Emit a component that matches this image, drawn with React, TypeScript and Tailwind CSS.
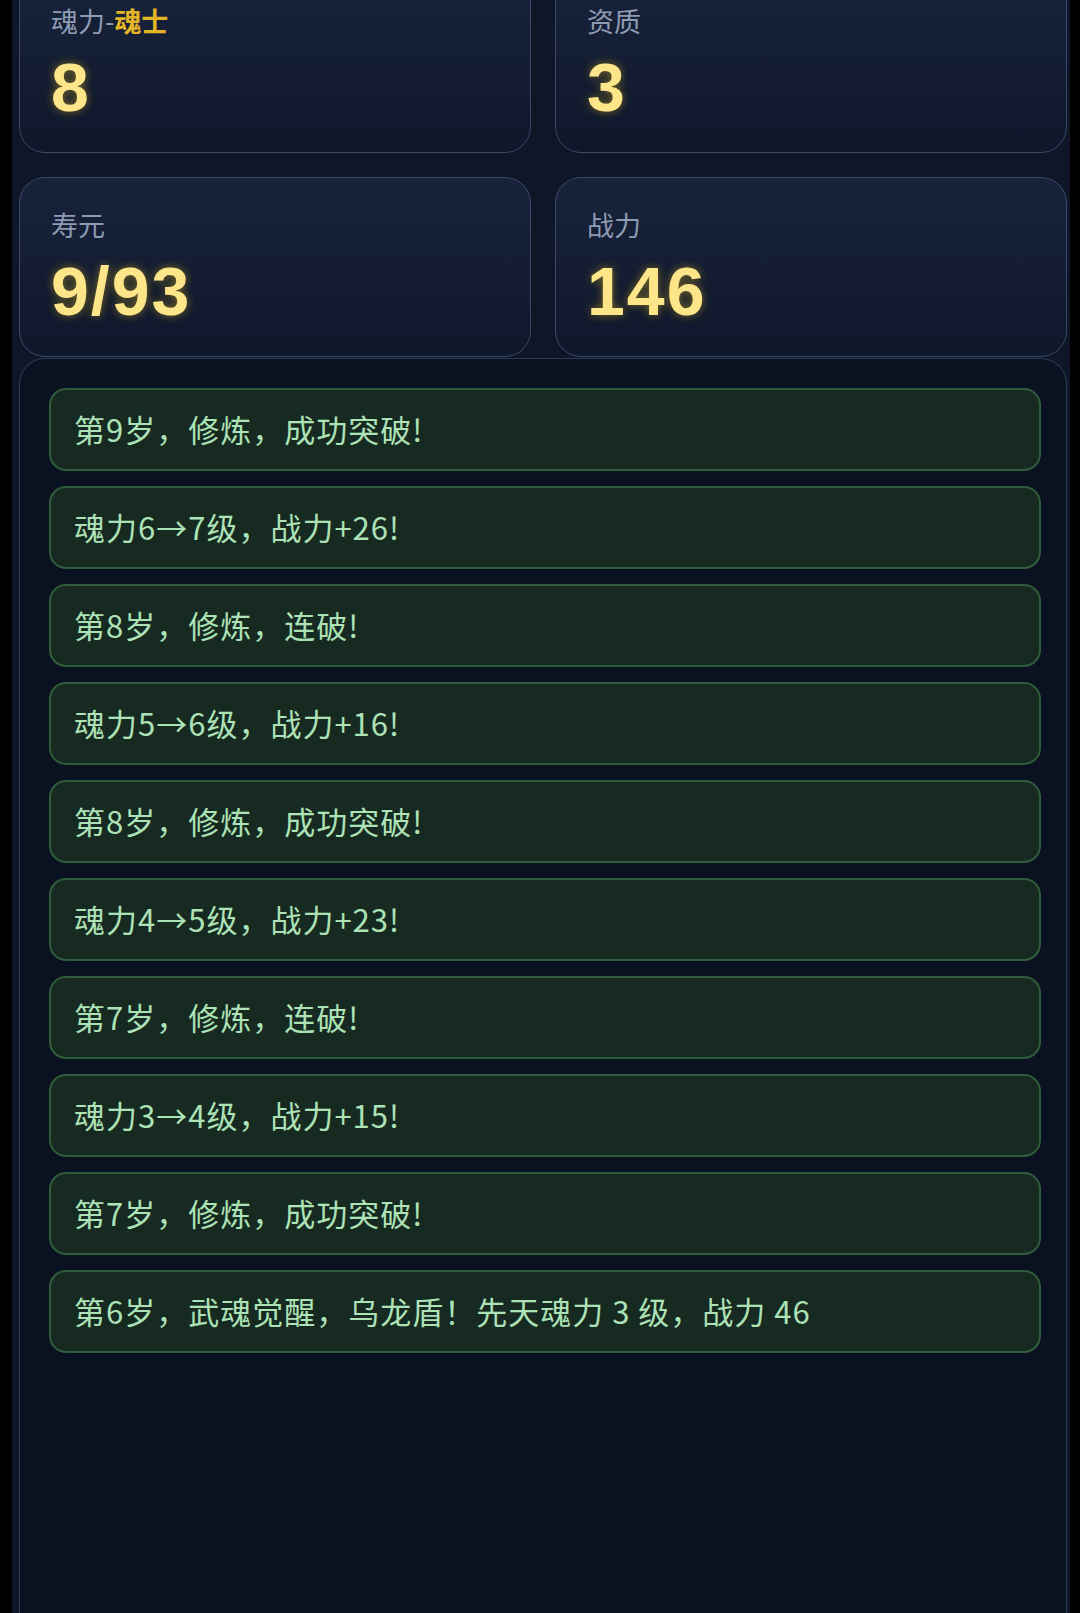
import React from 'react';

const stats = [
  { label: '魂力', tag: '魂士', value: '8' },
  { label: '资质', value: '3' },
  { label: '寿元', value: '9/93' },
  { label: '战力', value: '146' },
];

const logs = [
  '第9岁，修炼，成功突破!',
  '魂力6→7级，战力+26!',
  '第8岁，修炼，连破!',
  '魂力5→6级，战力+16!',
  '第8岁，修炼，成功突破!',
  '魂力4→5级，战力+23!',
  '第7岁，修炼，连破!',
  '魂力3→4级，战力+15!',
  '第7岁，修炼，成功突破!',
  '第6岁，武魂觉醒，乌龙盾！先天魂力 3 级，战力 46',
];

const StatCard: React.FC<{ label: string; tag?: string; value: string }> = ({ label, tag, value }) => (
  <div className="rounded-[26px] border border-[#3a4968] bg-gradient-to-b from-[#18233b] to-[#0f172b] pl-[31px] pt-[31px] pb-[27px]">
    <div className="text-[27px] leading-[32px] text-[#8e9bb4]">
      {label}
      {tag && (
        <>
          -<span className="font-bold text-[#e3b526]">{tag}</span>
        </>
      )}
    </div>
    <div className="mt-[12px] font-['Liberation_Sans',Arial,sans-serif] text-[68px] font-bold leading-[76px] tracking-[2px] text-[#fde68a] [text-shadow:0_0_10px_rgba(250,204,21,0.45)]">
      {value}
    </div>
  </div>
);

export default function App() {
  return (
    <div
      className="flex h-[1613px] w-full overflow-hidden bg-black"
      style={{ fontFamily: '"Noto Sans CJK SC", "Noto Sans", sans-serif' }}
    >
      <div className="ml-[12px] flex w-[1058px] flex-col overflow-hidden bg-[#0e1628] pl-[7px] pr-[3px]">
        {/* stat cards, page scrolled a bit */}
        <div className="-mt-[27px] grid grid-cols-2 gap-x-[24px] gap-y-[24px]">
          {stats.map((s) => (
            <StatCard key={s.label} label={s.label} tag={s.tag} value={s.value} />
          ))}
        </div>

        {/* log panel */}
        <div className="mt-[1px] flex-1 rounded-t-[26px] border border-b-0 border-[#2c3a56] bg-[#0a1120] pl-[29px] pr-[25px] pt-[29px]">
          <div className="flex flex-col gap-[15px]">
            {logs.map((line, i) => (
              <div
                key={i}
                className="flex h-[83px] items-center rounded-[17px] border-2 border-[#2f5c3b] bg-[#172a22] pl-[23px] text-[31px] tracking-[1px] text-[#ade2b7]"
              >
                {line}
              </div>
            ))}
          </div>
        </div>
      </div>
    </div>
  );
}
